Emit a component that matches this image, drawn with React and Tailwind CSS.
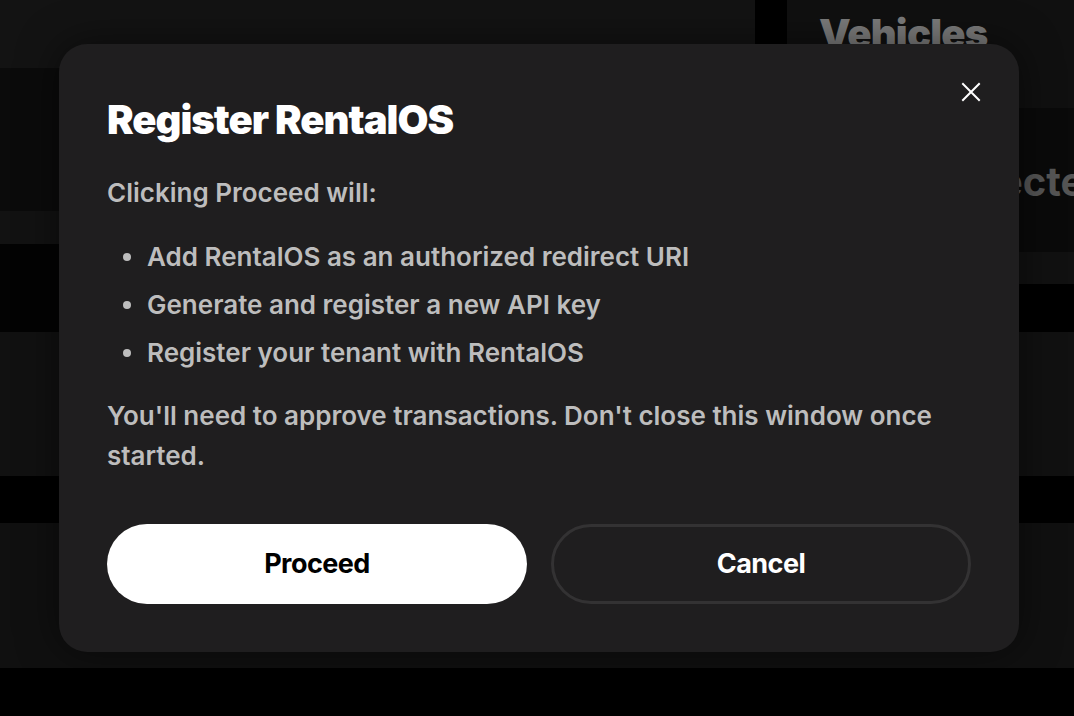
import React from 'react';

function Backdrop() {
    return (
        <div className="absolute inset-0 flex flex-col bg-black">
            <div className="flex h-[244px]">
                <div className="flex w-[755px] shrink-0 flex-col">
                    <div className="h-[68px] bg-[#131313]"></div>
                    <div className="h-[143px] bg-[#0b0b0b]"></div>
                    <div className="h-[33px] bg-[#121212]"></div>
                </div>
                <div className="w-[32px] shrink-0 bg-black"></div>
                <div className="flex min-w-0 flex-1 flex-col overflow-hidden">
                    <div className="h-[108px] bg-[#101010] pl-[32px] pt-[10px]">
                        <div className="text-[40px] font-black leading-[48px] tracking-[-0.02em] text-[#7c7c7c]">Vehicles</div>
                    </div>
                    <div className="h-[136px] overflow-hidden bg-[#0a0a0a] pt-[50px] pl-[108px]">
                        <div className="whitespace-nowrap text-[40px] font-bold leading-[48px] text-[#555]">Connected</div>
                    </div>
                </div>
            </div>
            <div className="flex h-[88px]">
                <div className="w-[787px] shrink-0 bg-[#030303]"></div>
                <div className="flex flex-1 flex-col">
                    <div className="h-[8px] bg-[#0a0a0a]"></div>
                    <div className="h-[32px] bg-[#111]"></div>
                    <div className="flex-1 bg-black"></div>
                </div>
            </div>
            <div className="h-[144px] bg-[#111]"></div>
            <div className="h-[47px] bg-black"></div>
            <div className="h-[145px] bg-[#101010]"></div>
            <div className="flex-1 bg-black"></div>
        </div>
    );
}

export default function App() {
    const items = [
        'Add RentalOS as an authorized redirect URI',
        'Generate and register a new API key',
        'Register your tenant with RentalOS',
    ];

    return (
        <div className="relative h-[716px] w-[1074px] overflow-hidden bg-black font-['Inter','Liberation_Sans',sans-serif]">
            <Backdrop />
            <div className="absolute left-[59px] top-[44px] w-[960px] rounded-[28px] bg-[#1f1e1f] px-[48px] pt-[48px] pb-[48px] shadow-[0_0_40px_rgba(0,0,0,0.5)]">
                <button className="absolute right-[38px] top-[38px] flex h-[20px] w-[20px] items-center justify-center text-white">
                    <svg width="20" height="20" viewBox="0 0 20 20" fill="none" stroke="currentColor" strokeWidth="2" strokeLinecap="square">
                        <path d="M2 2L18 18M18 2L2 18" />
                    </svg>
                </button>
                <h2 className="text-[40px] font-black leading-[56px] tracking-[-0.025em] text-white">Register RentalOS</h2>
                <p className="mt-[29px] text-[26px] font-semibold leading-[32px] text-[#bdbdbd]">Clicking Proceed will:</p>
                <ul className="mt-[24px] flex flex-col">
                    {items.map((t) => (
                        <li key={t} className="flex items-center text-[26px] font-semibold leading-[48px] text-[#bdbdbd]">
                            <span className="ml-[16px] mr-[16px] h-[8px] w-[8px] rounded-full bg-[#bdbdbd]"></span>
                            {t}
                        </li>
                    ))}
                </ul>
                <p className="mt-[19px] text-[26px] font-semibold leading-[40px] text-[#bdbdbd]">
                    You'll need to approve transactions. Don't close this window once started.
                </p>
                <div className="mt-[48px] grid grid-cols-2 gap-[24px]">
                    <button className="h-[80px] rounded-full bg-white text-[27px] font-bold tracking-[-0.02em] text-black">Proceed</button>
                    <button className="h-[80px] rounded-full border-[3px] border-[#333233] text-[27px] font-bold tracking-[-0.02em] text-white">Cancel</button>
                </div>
            </div>
        </div>
    );
}
